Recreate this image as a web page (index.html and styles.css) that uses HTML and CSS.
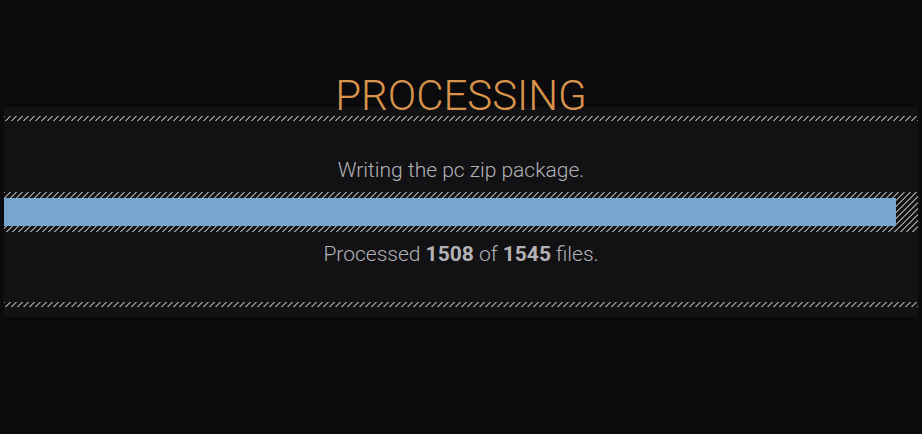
FILE: index.html
```html
<!DOCTYPE html>
<html>
<head>
<meta charset="utf-8">
<link rel="stylesheet" href="styles.css">
</head>
<body>
<h1 class="title">PROCESSING</h1>
<section class="panel">
  <div class="hatch"></div>
  <p class="message">Writing the pc zip package.</p>
  <div class="track"><div class="fill" style="width:97.6%"></div></div>
  <p class="count">Processed <b>1508</b> of <b>1545</b> files.</p>
  <div class="hatch"></div>
</section>
</body>
</html>
```
FILE: styles.css
```css
html, body {
  margin: 0;
  padding: 0;
  background: #0b0a0d;
}
body {
  padding: 75px 4px 0;
  font-family: Roboto, "Liberation Sans", sans-serif;
}
.title {
  margin: 0 0 -10px;
  font-size: 42px;
  line-height: 42px;
  font-weight: 300;
  color: #d8934b;
  text-align: center;
  letter-spacing: 0;
}
.panel {
  background: #121114;
  padding: 9px 0 10px;
  display: flex;
  flex-direction: column;
}
.hatch {
  height: 5px;
  background: repeating-linear-gradient(135deg, #8a898c 0 1.4px, transparent 1.4px 4.24px);
}
.message, .count {
  margin: 0;
  font-size: 21px;
  line-height: 24px;
  font-weight: 300;
  color: #b3b2b6;
  text-align: center;
}
.message {
  margin: 37px 0 10px;
}
.count {
  margin: 10px 0 36px;
}
.count b {
  font-weight: 700;
}
.track {
  height: 28px;
  padding: 6px 0;
  background: repeating-linear-gradient(135deg, #8a898c 0 1.4px, transparent 1.4px 4.24px);
}
.fill {
  height: 100%;
  background: #76a5cd;
}
```
